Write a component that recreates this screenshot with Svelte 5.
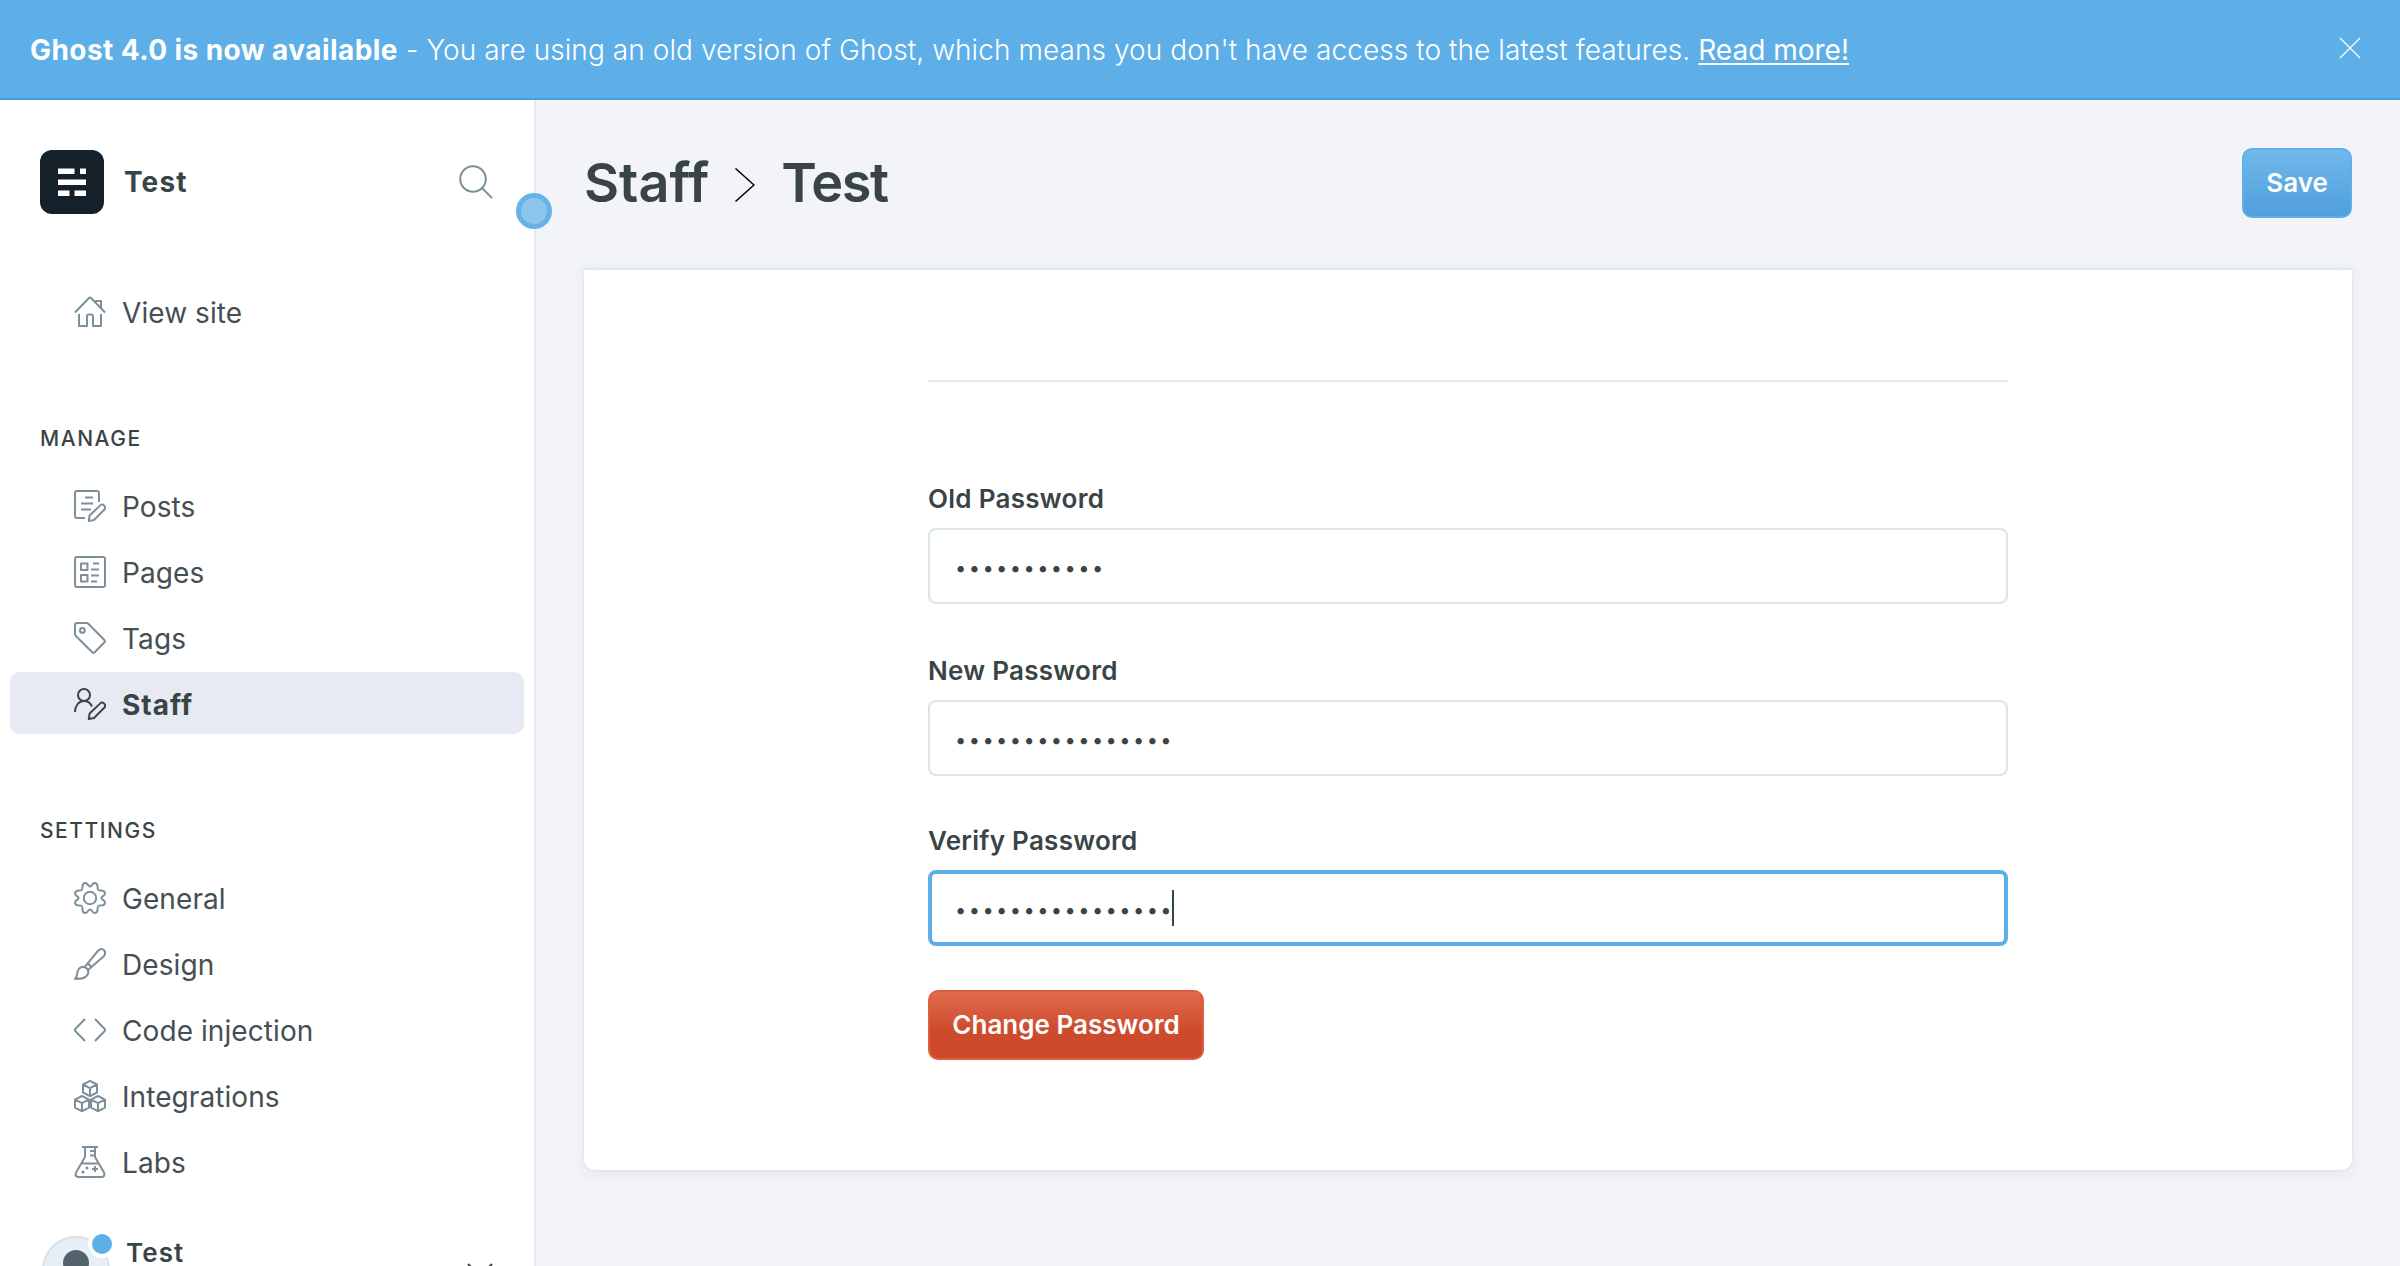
<script>
  const manage = [
    { label: 'Posts', icon: 'posts' },
    { label: 'Pages', icon: 'pages' },
    { label: 'Tags', icon: 'tags' },
    { label: 'Staff', icon: 'staff', active: true }
  ];
  const settings = [
    { label: 'General', icon: 'general' },
    { label: 'Design', icon: 'design' },
    { label: 'Code injection', icon: 'code' },
    { label: 'Integrations', icon: 'integrations' },
    { label: 'Labs', icon: 'labs' }
  ];
  const fields = [
    { label: 'Old Password', length: 11 },
    { label: 'New Password', length: 16 },
    { label: 'Verify Password', length: 16, focused: true }
  ];
</script>

{#snippet cube(x, y)}
  <path d="M{x} {y}l7 3.6v8l-7 3.6-7-3.6v-8zM{x - 7} {y + 3.6}l7 3.6 7-3.6M{x} {y + 7.2}v8" />
{/snippet}

{#snippet icon(name)}
  <svg class="icon" viewBox="0 0 32 32" aria-hidden="true">
    {#if name === 'home'}
      <path d="M1 16.5 14.7 2.2q1.3-1.2 2.6 0L31 16.5M5 18v12h8V20.5q0-2 2-2h2q2 0 2 2V30h8V18M21 5h6v7" />
    {:else if name === 'posts'}
      <path d="M11 28H3q-2 0-2-2V3q0-2 2-2h20q2 0 2 2v9M11 7.5h8M7 13.5h12M7 19.5h10" />
      <path d="M14.8 31l.8-5.5L26 15.6a2.9 2.9 0 0 1 4.2 4.2L20 30z" />
    {:else if name === 'pages'}
      <rect x="1" y="1" width="30" height="30" rx="2" />
      <path d="M7 7.5h6.5V14H7zM7 19h6.5v6.5H7zM19 7.5h6M17 13.5h8M17 19.5h8M17 25.5h6" />
    {:else if name === 'tags'}
      <path d="M1 3.2Q1 1 3.2 1h9.3q1 0 1.8.8L30.4 18q1.2 1.2 0 2.3L20.7 30.2q-1.2 1.2-2.4 0L1.8 14q-.8-.8-.8-1.8z" />
      <circle cx="8.4" cy="8.4" r="2.4" />
    {:else if name === 'staff'}
      <circle cx="10" cy="7" r="6" />
      <path d="M1 24c0-6 3.500-11 9-11 3.500 0 6.500 2 8 5.500" />
      <path d="M14.800 31l.8-5.500L26 15.600a2.900 2.900 0 0 1 4.200 4.200L20 30z" />
    {:else if name === 'general'}
      <circle cx="16" cy="16" r="6.2" />
      <path d="M16 4.600C18 4.600 18 1 20.600 1 23.500 1 23.600 3 23.600 5.500 23.600 8 24 8.400 26.500 8.400 29 8.400 31 8.500 31 11.400 31 14 27.400 14 27.400 16S31 18 31 20.600C31 23.500 29 23.600 26.500 23.600 24 23.600 23.600 24 23.600 26.500 23.600 29 23.500 31 20.600 31 18 31 18 27.400 16 27.400S14 31 11.400 31C8.500 31 8.400 29 8.400 26.500 8.400 24 8 23.600 5.500 23.600 3 23.600 1 23.500 1 20.600 1 18 4.600 18 4.600 16S1 14 1 11.400C1 8.500 3 8.400 5.500 8.400 8 8.400 8.400 8 8.400 5.500 8.400 3 8.500 1 11.400 1 14 1 14 4.600 16 4.600z" />
    {:else if name === 'design'}
      <path d="M1 30.800c3-2 1.500-5 3-8.500 1.500-3.300 6-4.600 8.600-2s2.300 6.300-1 8.500C8.600 30.800 5 31 1 30.800zM10.800 18.800 23.800 3c4.200-4.600 9.700.5 6 5.200L14 22M14 15.500l3.500 3.500" />
    {:else if name === 'code'}
      <path d="M11 5 1.500 14.700q-1.200 1.300 0 2.600L11 27M21 5l9.500 9.700q1.200 1.300 0 2.600L21 27" />
    {:else if name === 'integrations'}
      {@render cube(16, 0.9)}
      {@render cube(8, 16)}
      {@render cube(24, 16)}
    {:else if name === 'labs'}
      <path d="M8 1h16M11 1v10L2 26.500Q.5 31 5 31h22q4.500 0 3-4.500L21 11V1M7 17.500h18M21 5h-5M21 9.500h-5M18 23h6M21 20v6" />
      <circle class="dot" cx="13" cy="22" r="1.500" />
      <circle class="dot" cx="9" cy="26" r="1.500" />
    {/if}
  </svg>
{/snippet}

{#snippet row(item)}
  <a class="row" class:active={item.active}>
    {@render icon(item.icon)}
    <span>{item.label}</span>
  </a>
{/snippet}

<div class="app">
  <header class="banner">
    <p class="notice"><strong>Ghost 4.0 is now available</strong>{' '}<span>- You are using an old version of Ghost, which means you don't have access to the latest features.</span>{' '}<u>Read more!</u></p>
    <svg class="close" viewBox="0 0 22 22"><path d="M1 1l20 20M21 1L1 21" /></svg>
  </header>

  <div class="body">
    <aside class="sidebar">
      <div class="site">
        <svg class="logo" viewBox="0 0 64 64">
          <rect width="64" height="64" rx="12" fill="#15212a" />
          <path fill="#fff" d="M18 18.500h16.500V24H18zM40 18.500h6V24h-6zM18 29.500h28V35H18zM18 40.500h11.500V46H18zM34.500 40.500H46V46H34.500z" />
        </svg>
        <span class="site-name">Test</span>
        <svg class="search" viewBox="0 0 34 34"><circle cx="14" cy="14" r="12.800" /><path d="M23 23l10 10" /></svg>
      </div>
      <nav>
        {@render row({ label: 'View site', icon: 'home' })}
        <h2>Manage</h2>
        {#each manage as item}{@render row(item)}{/each}
        <h2>Settings</h2>
        {#each settings as item}{@render row(item)}{/each}
      </nav>
      <div class="user">
        <div class="avatar">
          <svg viewBox="0 0 68 68">
            <circle cx="34" cy="34" r="33" fill="#e6eef6" stroke="#d8dfe5" stroke-width="2" />
            <circle cx="34" cy="27" r="13" fill="#55646c" />
            <path d="M12 56c4-20 40-20 44 0q-22 20-44 0" fill="#55646c" />
          </svg>
          <i class="badge"></i>
        </div>
        <span class="user-name">Test</span>
        <svg class="chevron" viewBox="0 0 26 14"><path d="M1 1l12 12L25 1" /></svg>
      </div>
      <i class="handle"></i>
    </aside>

    <main>
      <div class="top">
        <h1>
          <span>Staff</span>
          <svg class="sep" viewBox="0 0 20 34"><path d="M.5.500 19 17 .5 33.500" /></svg>
          <span class="current">Test</span>
        </h1>
        <button class="save">Save</button>
      </div>
      <section class="card">
        <form>
          {#each fields as field}
            <div class="field">
              <span class="label">{field.label}</span>
              <div class="input" class:focused={field.focused}>
                <span class="dots">{'•'.repeat(field.length)}</span>
                {#if field.focused}<i class="caret"></i>{/if}
              </div>
            </div>
          {/each}
          <button class="change" type="button">Change Password</button>
        </form>
      </section>
    </main>
  </div>
</div>

<style>
  :global(body) {
    margin: 0;
    overflow: hidden;
  }
  .app {
    height: 1266px;
    overflow: hidden;
    display: flex;
    flex-direction: column;
    font-family: Inter, 'Liberation Sans', sans-serif;
    color: #394447;
    background: #f2f4f8;
  }
  svg {
    display: block;
    flex: none;
    fill: none;
  }
  .banner {
    flex: none;
    box-sizing: border-box;
    height: 100px;
    display: flex;
    justify-content: space-between;
    padding: 0 39px 0 30px;
    background: #5eafe8;
    border-bottom: 2px solid #469ee0;
    color: #fff;
  }
  .notice {
    margin: 0;
    line-height: 34px;
    padding-top: 33px;
    font-size: 28px;
    font-weight: 300;
    white-space: pre;
    letter-spacing: 0.075px;
  }
  .notice strong {
    font-weight: 700;
    letter-spacing: 0.43px;
  }
  .notice u {
    font-weight: 400;
    letter-spacing: 0;
    text-decoration-thickness: 2px;
    text-underline-offset: 3px;
  }
  .close {
    width: 22px;
    height: 22px;
    margin-top: 37px;
    stroke: #fff;
    stroke-width: 1.2;
  }
  .body {
    flex: 1;
    min-height: 0;
    display: flex;
  }
  .sidebar {
    position: relative;
    flex: none;
    box-sizing: border-box;
    width: 536px;
    background: #fff;
    border-right: 2px solid #e6e9f1;
  }
  .site {
    display: flex;
    align-items: center;
    padding: 50px 41px 0 40px;
  }
  .logo {
    width: 64px;
    height: 64px;
  }
  .site-name {
    flex: 1;
    margin-left: 20px;
    font-size: 28px;
    font-weight: 700;
    letter-spacing: 1.1px;
  }
  .search {
    width: 34px;
    height: 34px;
    stroke: #7d909a;
    stroke-width: 2;
  }
  nav {
    display: flex;
    flex-direction: column;
    gap: 4px;
    padding: 66px 10px 0;
  }
  .row {
    display: flex;
    align-items: center;
    height: 62px;
    padding-left: 64px;
    border-radius: 10px;
    font-size: 28px;
    letter-spacing: 0.08px;
    color: #454f53;
  }
  .row span {
    padding-top: 3px;
  }
  .row.active {
    background: #e7eaf2;
    font-weight: 700;
    letter-spacing: 1px;
    color: #394447;
  }
  .icon {
    width: 32px;
    height: 32px;
    margin: 2px 16px 0 0;
    stroke: #7d909a;
    stroke-width: 2;
    stroke-linejoin: round;
  }
  .active .icon {
    stroke: #394447;
  }
  .icon .dot {
    fill: #7d909a;
    stroke: none;
  }
  h2 {
    margin: 80px 0 18px 30px;
    font-size: 21px;
    line-height: 26px;
    font-weight: 500;
    letter-spacing: 1.55px;
    text-transform: uppercase;
  }
  .user {
    display: flex;
    padding: 44px 41px 0 42px;
  }
  .avatar {
    position: relative;
    width: 68px;
    height: 68px;
  }
  .badge {
    position: absolute;
    top: -6px;
    left: 46px;
    width: 20px;
    height: 20px;
    border: 4px solid #fff;
    border-radius: 50%;
    background: #5eafe8;
  }
  .user-name {
    flex: 1;
    margin-left: 16px;
    font-size: 26px;
    line-height: 33px;
    font-weight: 600;
    letter-spacing: 1.1px;
  }
  .chevron {
    width: 26px;
    height: 14px;
    margin-top: 27px;
    stroke: #394447;
    stroke-width: 2;
  }
  .handle {
    position: absolute;
    top: 93px;
    right: -18px;
    box-sizing: border-box;
    width: 36px;
    height: 36px;
    border: 5px solid #66b3ea;
    border-radius: 50%;
    background: #8cc4ee;
  }
  main {
    flex: 1;
    padding: 48px 48px 0;
  }
  .top {
    display: flex;
    justify-content: space-between;
    height: 120px;
  }
  h1 {
    display: flex;
    margin: 0;
    font-size: 54px;
    line-height: 70px;
    font-weight: 600;
    letter-spacing: 0;
  }
  .current {
    letter-spacing: -1.4px;
  }
  .sep {
    width: 20px;
    height: 34px;
    margin: 20px 26px 0 26px;
    stroke: #000;
    stroke-width: 1.5;
  }
  button {
    box-sizing: border-box;
    height: 70px;
    padding: 0 0 1px;
    border-radius: 10px;
    font: 600 26px Inter, 'Liberation Sans', sans-serif;
    letter-spacing: 0;
    color: #fff;
  }
  .save {
    width: 110px;
    border: 2px solid #5eafe8;
    background: linear-gradient(#71b8eb, #4f9fdc);
  }
  .card {
    box-sizing: border-box;
    height: 902px;
    padding: 110px 344px 0;
    border-top: 2px solid #dfe9f0;
    border-radius: 0 0 10px 10px;
    background: #fff;
    box-shadow: 0 4px 14px rgba(60, 60, 90, 0.07), 0 0 2px rgba(60, 60, 90, 0.12);
  }
  form {
    border-top: 2px solid #e6edf2;
    padding-top: 100px;
  }
  .field {
    margin-bottom: 50px;
  }
  .field:nth-of-type(2) {
    margin-bottom: 48px;
  }
  .field:nth-of-type(3) {
    margin-bottom: 44px;
  }
  .label {
    display: block;
    height: 46px;
    line-height: 34px;
    font-size: 26px;
    font-weight: 600;
    letter-spacing: 0.28px;
  }
  .input {
    box-sizing: border-box;
    display: flex;
    align-items: center;
    height: 76px;
    padding-left: 25px;
    border: 2px solid #d9e4eb;
    border-radius: 8px;
  }
  .input.focused {
    border: 4px solid #5eafe8;
    padding-left: 23px;
  }
  .dots {
    margin-top: 4px;
    font-size: 20px;
    line-height: 30px;
    letter-spacing: 2.44px;
  }
  .caret {
    width: 2px;
    height: 36px;
    margin-left: -2px;
    background: #394447;
  }
  .change {
    display: block;
    width: 276px;
    border: 2px solid #dc6040;
    background: linear-gradient(#e06a4c, #cd4a2c 60%);
  }
</style>
